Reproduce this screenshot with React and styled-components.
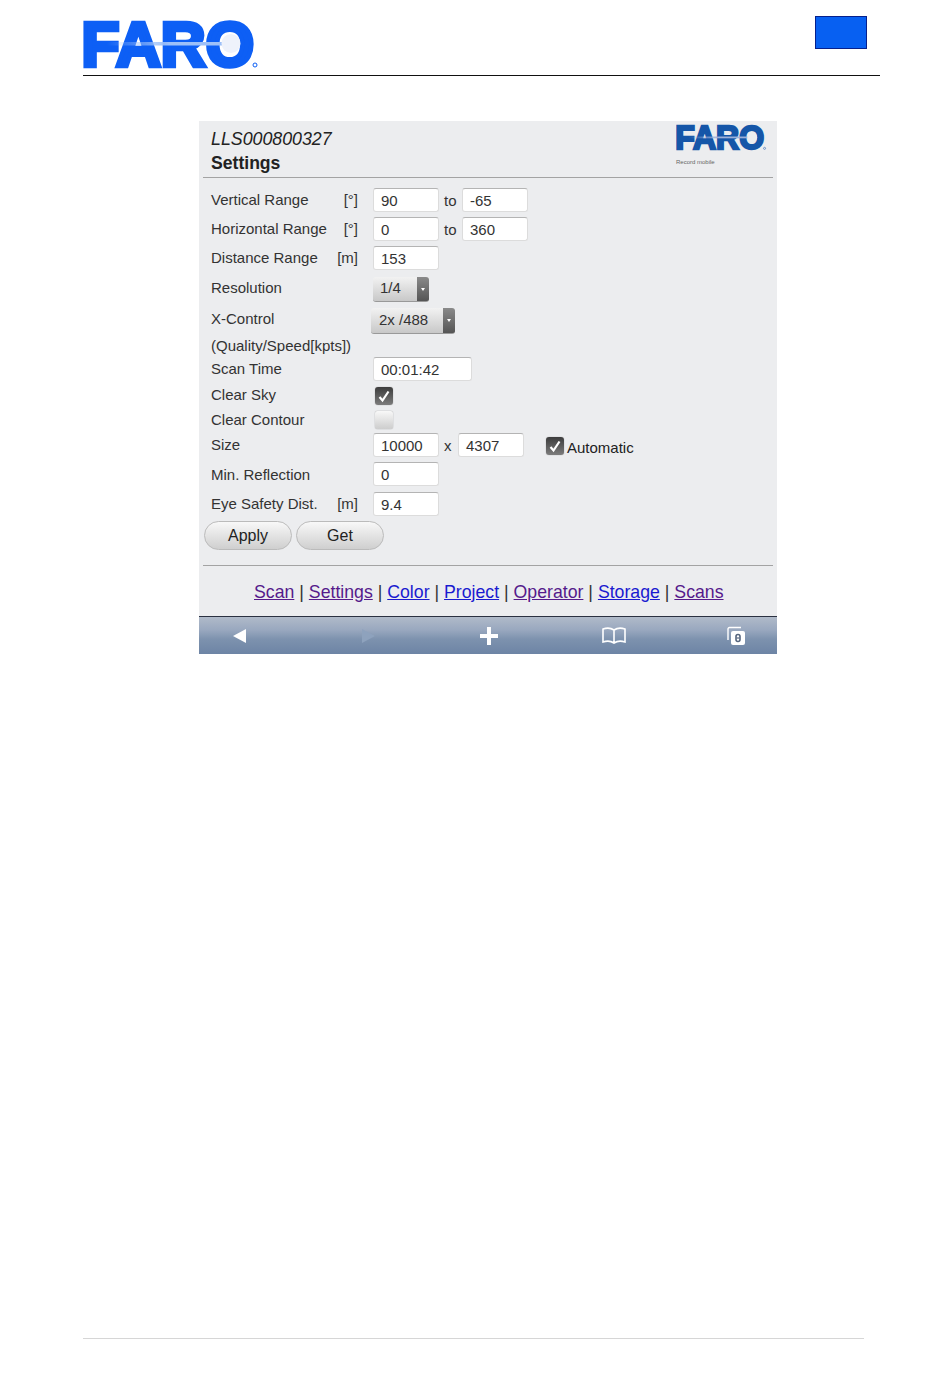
import React from "react";
import styled, { createGlobalStyle } from "styled-components";

const Global = createGlobalStyle`
  html, body { margin: 0; padding: 0; background: #fff; }
  body { font-family: "Liberation Sans", Arial, sans-serif; }
`;

const Page = styled.div`
  width: 950px; height: 1379px; display: flex; flex-direction: column; box-sizing: border-box;
`;
const Header = styled.header`
  margin: 0 70px 0 83px; height: 76px; box-sizing: border-box; border-bottom: 1px solid #111;
  display: flex; justify-content: space-between; align-items: flex-start;
`;
const LogoBox = styled.div`margin-top: 8px; line-height: 0;`;
const BlueBox = styled.div`
  width: 50px; height: 31px; margin: 16px 13px 0 0; background: #0760f2; border: 1px solid #06208c;
`;
const Panel = styled.main`
  width: 578px; height: 533px; margin: 45px 0 0 199px; background: #ecedef; display: flex; flex-direction: column;
  color: #333; font-size: 15px;
`;
const PanelHead = styled.div`
  height: 57px; box-sizing: border-box; margin: 0 4px; padding: 7px 8px 0; border-bottom: 1px solid #a3a3a3; position: relative; flex: none;
`;
const Serial = styled.div`font-style: italic; font-size: 17.8px; line-height: 22px; color: #222;`;
const Title = styled.div`font-weight: bold; font-size: 17.6px; line-height: 26px; color: #222;`;
const SmallLogo = styled.div`position: absolute; left: 473px; top: -2px; display: flex; flex-direction: column; align-items: flex-start; line-height: 0;`;
const Tagline = styled.span`font-size: 6px; line-height: 6px; color: #666; margin-top: 3px;`;
const Form = styled.div`padding: 8px 0 0 12px; flex: none;`;
const Row = styled.div`height: ${p => p.$h}px; display: flex; align-items: center;`;
const Label = styled.div`
  width: 147px; margin: 0 15px 2px 0; display: flex; justify-content: space-between; white-space: nowrap; flex: none;
`;
const Field = styled.span`
  width: ${p => p.$w || 66}px; height: 24px; margin-bottom: 2px; box-sizing: border-box; background: #fff; border-radius: 3px;
  border: 1px solid #dcdcdc; border-top-color: #b4b4b4; padding-left: 7px; line-height: 23px; flex: none; color: #333;
`;
const Between = styled.span`width: ${p => p.$w || 23}px; padding-left: 5px; box-sizing: border-box; flex: none;`;
const Select = styled.div`
  width: ${p => p.$w}px; height: ${p => p.$ht}px; margin: 2px 0 0 ${p => p.$ml || 0}px; box-sizing: border-box; display: flex; border-radius: 3px; overflow: hidden;
  background: linear-gradient(#f2f2f2, #c8c8c8); border-bottom: 1px solid #999; line-height: ${p => p.$ht - 3}px;
`;
const SelectText = styled.span`flex: 1; padding-left: ${p => p.$pl}px;`;
const SelectArrow = styled.span`
  width: 12px; background: linear-gradient(#8a8a8a, #555); position: relative;
  &::after { content: ""; position: absolute; left: 4px; top: 45%; border: 2px solid transparent; border-top: 3px solid #fff; }
`;
const Check = styled.span`
  width: 18px; height: 18px; margin-left: ${p => p.$ml ?? 2}px; border-radius: 3px; display: flex; align-items: center; justify-content: center; flex: none;
  background: ${p => p.$on ? "linear-gradient(#3c3c3c, #7c7c7c)" : "linear-gradient(#f8f8f8, #cdcdcd)"};
  box-shadow: 0 0 1px ${p => p.$on ? "#888" : "#666"};
`;
const AutoLabel = styled.span`margin: 4px 0 0 3px; color: #222;`;
const Buttons = styled.div`display: flex; gap: 4px; margin: 2px 0 0 5px; flex: none;`;
const Button = styled.div`
  width: 88px; height: 29px; box-sizing: border-box; border-radius: 15px; border: 1px solid #bbb; text-align: center; line-height: 28px; font-size: 16px; color: #222;
  background: linear-gradient(#f8f8f8, #cfcfcf);
`;
const Rule = styled.div`height: 1px; background: #a3a3a3; margin: 15px 4px 0; flex: none;`;
const Nav = styled.nav`
  height: 50px; box-sizing: border-box; padding: 2px 0 0 55px; display: flex; align-items: center; font-size: 17.7px; color: #333; white-space: nowrap; flex: none;
`;
const Link = styled.a`color: ${p => p.$new ? "#1a1ad0" : "#551a8b"}; text-decoration: underline;`;
const Sep = styled.span`width: 14.5px; text-align: center;`;
const Toolbar = styled.div`
  height: 38px; box-sizing: border-box; border-top: 1px solid #2a3040; background: linear-gradient(#b0bac9 0%, #99a8bf 35%, #7d92ae 60%, #6d84a5 100%);
  display: flex; justify-content: space-between; align-items: center; padding: 0 29px; flex: none;
  svg { overflow: visible; }
`;
const Footer = styled.footer`
  margin: auto 86px 40px 83px; height: 1px; background: #d6d6d6;
`;

const BigLogo = ({ id, scale, c, light, beam }) => (
  <svg width={182 * scale} height={72 * scale} viewBox="0 -10 182 72" role="img" aria-label="FARO">
    <defs>
      <linearGradient id={id} x1="0" x2="1">
        <stop offset="0" stopColor={beam} stopOpacity="0" />
        <stop offset="0.5" stopColor={beam} />
        <stop offset="1" stopColor={beam} />
      </linearGradient>
    </defs>
    <text x="-1.5" y="47.8" fontFamily="Liberation Sans" fontWeight="bold" fontSize="63" fill={c} stroke={c} strokeWidth="4.5" strokeLinejoin="miter" textLength="172.5" lengthAdjust="spacingAndGlyphs">FARO</text>
    <rect x="24" y="24" width="124" height="3.5" fill={`url(#${id})`} />
    <circle cx="148" cy="25.5" r="9.5" fill={light} />
    <circle cx="172" cy="47" r="2" fill="none" stroke={c} strokeWidth="1" />
  </svg>
);

const Back = () => (
  <svg width="24" height="18" viewBox="0 0 24 18"><path d="M5 9 L18 2 V16 Z" fill="#fff" /></svg>
);
const Forward = () => (
  <svg width="24" height="18" viewBox="0 0 24 18"><path d="M24 9 L11 2 V16 Z" fill="#8ea2bd" /></svg>
);
const Plus = () => (
  <svg width="24" height="20" viewBox="0 0 24 20"><path d="M13 1h4v7h7v4h-7v7h-4v-7h-7v-4h7z" fill="#fff" /></svg>
);
const Book = () => (
  <svg width="28" height="20" viewBox="0 0 28 20" fill="none" stroke="#fff" strokeWidth="1.6">
    <path d="M17 4C14 2 9 2 6 3v13c3-1 8-1 11 1 3-2 8-2 11-1V3c-3-1-8-1-11 1zM17 4v13" />
  </svg>
);
const Tabs = () => (
  <svg width="24" height="20" viewBox="0 0 24 20">
    <path d="M4 14V3a1.5 1.5 0 0 1 1.5-1.5H17" fill="none" stroke="#fff" strokeWidth="1.4" />
    <rect x="7" y="5" width="14" height="14" rx="2" fill="#fff" />
    <rect x="12" y="8.5" width="4" height="7" rx="2" fill="none" stroke="#55657e" strokeWidth="1.6" />
    <path d="M12.5 12h3" stroke="#55657e" strokeWidth="1.2" />
  </svg>
);
const Tick = () => (
  <svg width="14" height="14" viewBox="0 0 14 14"><path d="M2.5 8 L5.5 11.5 L11.5 2.5" fill="none" stroke="#fff" strokeWidth="2.2" /></svg>
);

const FormLabel = ({ text, unit }) => <Label><span>{text}</span>{unit && <span>{unit}</span>}</Label>;

const links = [["Scan"], ["Settings"], ["Color", true], ["Project", true], ["Operator"], ["Storage", true], ["Scans"]];

export default function App() {
  return (
    <Page>
      <Global />
      <Header>
        <LogoBox><BigLogo id="big" scale={1} c="#0d5ff5" light="#eef2fb" beam="#9dc0f8" /></LogoBox>
        <BlueBox />
      </Header>
      <Panel>
        <PanelHead>
          <Serial>LLS000800327</Serial>
          <Title>Settings</Title>
          <SmallLogo>
            <BigLogo id="small" scale={0.515} c="#1556a8" light="#ecedef" beam="#9db0d8" />
            <Tagline>Record mobile</Tagline>
          </SmallLogo>
        </PanelHead>
        <Form>
          <Row $h={29}><FormLabel text="Vertical Range" unit="[°]" /><Field>90</Field><Between>to</Between><Field>-65</Field></Row>
          <Row $h={29}><FormLabel text="Horizontal Range" unit="[°]" /><Field>0</Field><Between>to</Between><Field>360</Field></Row>
          <Row $h={29}><FormLabel text="Distance Range" unit="[m]" /><Field>153</Field></Row>
          <Row $h={31}><FormLabel text="Resolution" /><Select $w={56} $ht={25}><SelectText $pl={7}>1/4</SelectText><SelectArrow /></Select></Row>
          <Row $h={31}><FormLabel text="X-Control" /><Select $w={84} $ht={26} $ml={-2}><SelectText $pl={8}>2x /488</SelectText><SelectArrow /></Select></Row>
          <Row $h={22}><FormLabel text="(Quality/Speed[kpts])" /></Row>
          <Row $h={25}><FormLabel text="Scan Time" /><Field $w={99}>00:01:42</Field></Row>
          <Row $h={27}><FormLabel text="Clear Sky" /><Check $on><Tick /></Check></Row>
          <Row $h={22}><FormLabel text="Clear Contour" /><Check /></Row>
          <Row $h={29}>
            <FormLabel text="Size" />
            <Field>10000</Field><Between $w={19}>x</Between><Field>4307</Field>
            <Check $on $ml={22}><Tick /></Check><AutoLabel>Automatic</AutoLabel>
          </Row>
          <Row $h={30}><FormLabel text="Min. Reflection" /><Field>0</Field></Row>
          <Row $h={29}><FormLabel text="Eye Safety Dist." unit="[m]" /><Field>9.4</Field></Row>
        </Form>
        <Buttons><Button>Apply</Button><Button>Get</Button></Buttons>
        <Rule />
        <Nav>
          {links.map(([name, fresh], i) => (
            <React.Fragment key={name}>
              {i > 0 && <Sep>|</Sep>}
              <Link $new={fresh}>{name}</Link>
            </React.Fragment>
          ))}
        </Nav>
        <Toolbar><Back /><Forward /><Plus /><Book /><Tabs /></Toolbar>
      </Panel>
      <Footer />
    </Page>
  );
}
